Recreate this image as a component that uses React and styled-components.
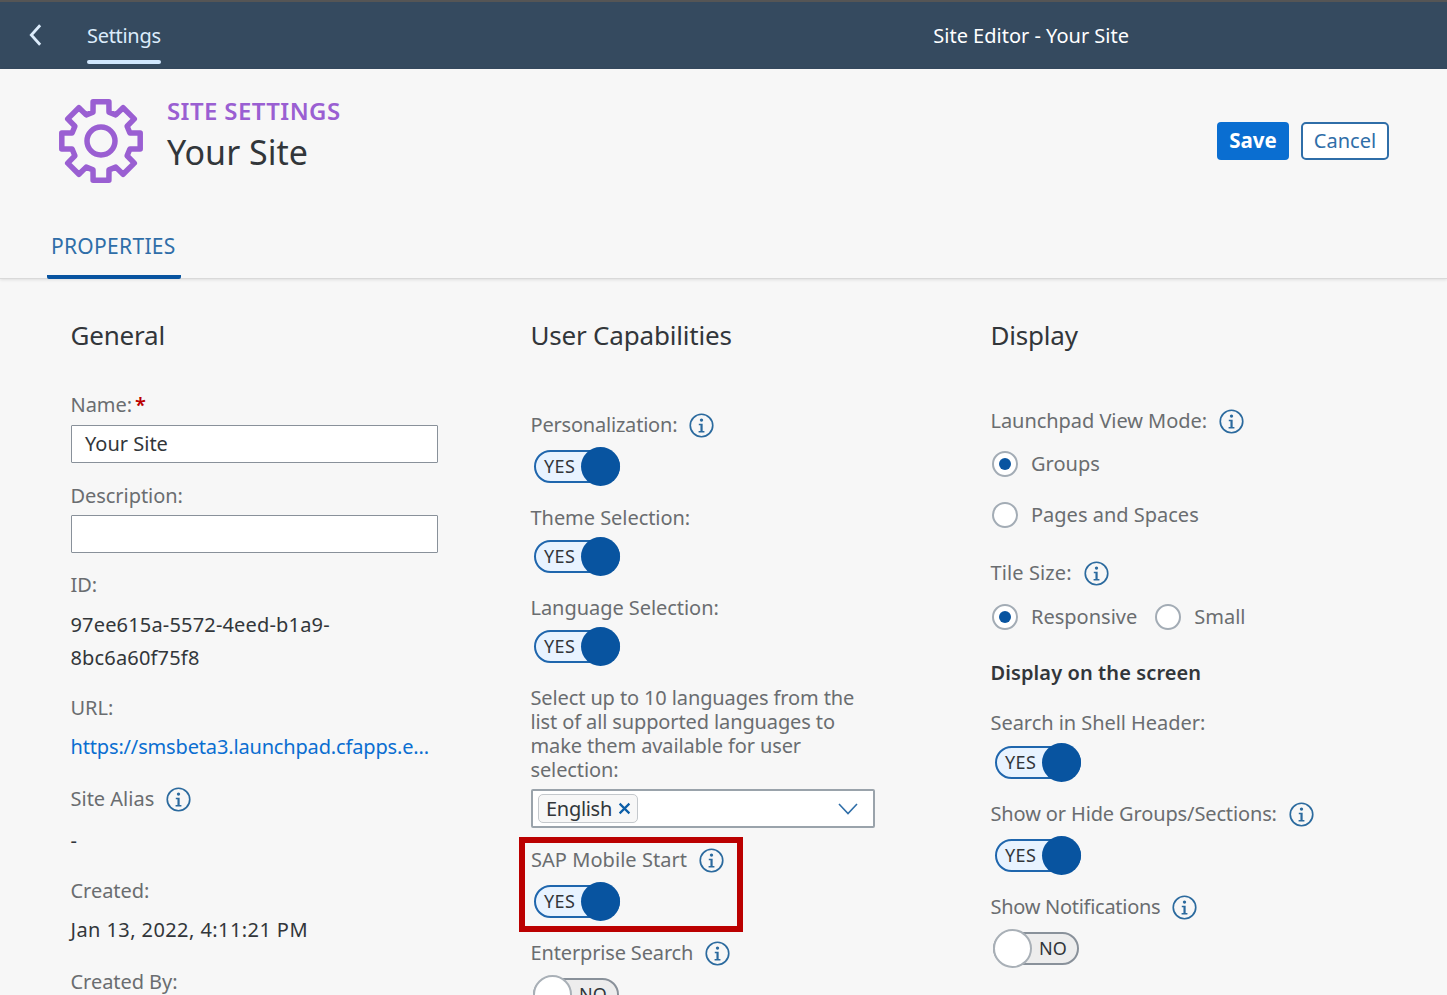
import React from "react";
import styled, { createGlobalStyle } from "styled-components";

const GlobalStyle = createGlobalStyle`
  html, body { margin: 0; padding: 0; height: 995px; overflow: hidden; background: #f7f7f7; }
  * { box-sizing: border-box; }
`;

const FONT = `"Noto Sans", "Open Sans", sans-serif`;

function gearPath(cx, cy) {
  const teeth = 8;
  const outer = 40;
  const root = 30;
  const pts = [];
  for (let i = 0; i < teeth; i++) {
    const a = (i * 2 * Math.PI) / teeth - Math.PI / 2;
    const tooth = 0.2;
    const base = 0.27;
    pts.push([a - base, root], [a - tooth, outer], [a + tooth, outer], [a + base, root]);
  }
  return (
    pts
      .map(([a, r], i) => `${i ? "L" : "M"}${(cx + r * Math.cos(a)).toFixed(1)} ${(cy + r * Math.sin(a)).toFixed(1)}`)
      .join(" ") + " Z"
  );
}

function GearIcon() {
  return (
    <GearSvg viewBox="0 0 88 88">
      <path d={gearPath(44, 44)} fill="none" stroke="#9a5fd2" strokeWidth="5.5" strokeLinejoin="round" />
      <circle cx="44" cy="44" r="14" fill="none" stroke="#9a5fd2" strokeWidth="5.5" />
    </GearSvg>
  );
}

function InfoIcon() {
  return (
    <InfoSvg viewBox="0 0 24 24">
      <circle cx="12" cy="12" r="10.8" fill="none" stroke="#2b6a9e" strokeWidth="1.6" />
      <circle cx="12" cy="6.8" r="1.6" fill="#2b6a9e" />
      <path d="M9.4 10.2h3.7v7h1.7v1.5H9.2v-1.5h1.8v-5.5H9.4z" fill="#2b6a9e" />
    </InfoSvg>
  );
}

function Toggle({ on = true, indent = 3, gap = 10 }) {
  return (
    <ToggleBox $indent={indent} $gap={gap}>
      <Track $on={on}>{on ? "YES" : "NO"}</Track>
      <Knob $on={on} />
    </ToggleBox>
  );
}

function Radio({ label, checked, gap }) {
  return (
    <RadioItem $gap={gap}>
      <RadioDot $checked={checked} />
      <RadioText>{label}</RadioText>
    </RadioItem>
  );
}

export default function App() {
  return (
    <Page>
      <GlobalStyle />
      <Shell>
        <BackButton viewBox="0 0 14 24">
          <path d="M12 1.5 L2.5 12 L12 22.5" fill="none" stroke="#dcecfb" strokeWidth="3" />
        </BackButton>
        <ShellTab>Settings</ShellTab>
        <ShellTitle>Site Editor - Your Site</ShellTitle>
      </Shell>

      <Header>
        <HeaderTop>
          <GearIcon />
          <TitleBlock>
            <Eyebrow>SITE SETTINGS</Eyebrow>
            <SiteName>Your Site</SiteName>
          </TitleBlock>
          <Actions>
            <SaveButton>Save</SaveButton>
            <CancelButton>Cancel</CancelButton>
          </Actions>
        </HeaderTop>
        <Tab>PROPERTIES</Tab>
      </Header>

      <Columns>
        <Column>
          <Heading>General</Heading>
          <Label $top={39}>Name:<Required>*</Required></Label>
          <TextBox $top={8}>Your Site</TextBox>
          <Label $top={21}>Description:</Label>
          <TextBox $top={7} />
          <Label $top={20}>ID:</Label>
          <Value $top={11} $lines={33} $ls={0.17}>97ee615a-5572-4eed-b1a9-<br />8bc6a60f75f8</Value>
          <Label $top={22}>URL:</Label>
          <LinkValue $top={15} $ls={-0.16}>https://smsbeta3.launchpad.cfapps.e...</LinkValue>
          <Label $top={28} $ls={0}>Site Alias<InfoIcon /></Label>
          <Value $top={18}>-</Value>
          <Label $top={26}>Created:</Label>
          <Value $top={15} $ls={0.42}>Jan 13, 2022, 4:11:21 PM</Value>
          <Label $top={28}>Created By:</Label>
        </Column>

        <Column>
          <Heading>User Capabilities</Heading>
          <Label $top={59} $ls={-0.2}>Personalization:<InfoIcon /></Label>
          <Toggle />
          <Label $top={20}>Theme Selection:</Label>
          <Toggle gap={7} />
          <Label $top={20}>Language Selection:</Label>
          <Toggle gap={7} />
          <Hint>
            Select up to 10 languages from the<br />
            list of all supported languages to<br />
            make them available for user<br />
            selection:
          </Hint>
          <Select>
            <Chip>English<ChipClose viewBox="0 0 12 12"><path d="M1.5 1.5 L10.5 10.5 M10.5 1.5 L1.5 10.5" stroke="#0b5ea8" strokeWidth="2" /></ChipClose></Chip>
            <Chevron viewBox="0 0 20 12"><path d="M1 1 L10 10.5 L19 1" fill="none" stroke="#2f6ea8" strokeWidth="1.6" /></Chevron>
          </Select>
          <Highlight>
            <Label $ls={0.05}>SAP Mobile Start<InfoIcon /></Label>
            <Toggle />
          </Highlight>
          <Label $top={9} $ls={-0.15}>Enterprise Search<InfoIcon /></Label>
          <Toggle on={false} indent={2} />
        </Column>

        <Column>
          <Heading>Display</Heading>
          <Label $top={55} $ls={-0.05}>Launchpad View Mode:<InfoIcon /></Label>
          <Radio label="Groups" checked gap={18} />
          <Radio label="Pages and Spaces" gap={25} />
          <Label $top={33} $ls={0.1}>Tile Size:<InfoIcon /></Label>
          <RadioRow>
            <Radio label="Responsive" checked />
            <Radio label="Small" />
          </RadioRow>
          <SubHeading>Display on the screen</SubHeading>
          <Label $top={26}>Search in Shell Header:</Label>
          <Toggle indent={4} gap={8} />
          <Label $top={20} $ls={-0.13}>Show or Hide Groups/Sections:<InfoIcon /></Label>
          <Toggle indent={4} />
          <Label $top={20} $ls={-0.28}>Show Notifications<InfoIcon /></Label>
          <Toggle on={false} indent={2} />
        </Column>
      </Columns>
    </Page>
  );
}

const Page = styled.div`
  width: 1447px;
  height: 995px;
  overflow: hidden;
  background: #f7f7f7;
  font-family: ${FONT};
`;

const Shell = styled.div`
  height: 69px;
  background: #354a5f;
  border-top: 2px solid #555;
  display: flex;
  align-items: center;
  padding: 0 318px 0 29px;
`;

const BackButton = styled.svg`
  width: 13px;
  height: 24px;
  margin-top: -2px;
`;

const ShellTab = styled.div`
  margin-left: 45px;
  height: 67px;
  line-height: 67px;
  width: 74px;
  font-size: 20px;
  letter-spacing: -0.3px;
  color: #dcecfb;
  white-space: nowrap;
  position: relative;
  &::after {
    content: "";
    position: absolute;
    left: 0;
    right: 0;
    top: 58px;
    height: 4px;
    border-radius: 2px;
    background: #d1e8ff;
  }
`;

const ShellTitle = styled.div`
  margin-left: auto;
  font-size: 20px;
  color: #fff;
  white-space: nowrap;
`;

const Header = styled.div`
  height: 210px;
  background: #f7f7f7;
  border-bottom: 1px solid #d9d9d9;
  box-shadow: 0 1px 3px rgba(0, 0, 0, 0.1);
  display: flex;
  flex-direction: column;
  justify-content: space-between;
`;

const HeaderTop = styled.div`
  display: flex;
  padding: 28px 58px 0 57px;
`;

const GearSvg = styled.svg`
  width: 88px;
  height: 88px;
`;

const TitleBlock = styled.div`
  margin-left: 22px;
`;

const Eyebrow = styled.div`
  font-size: 24px;
  font-weight: 600;
  letter-spacing: 0.4px;
  line-height: 28px;
  margin-bottom: 2px;
  color: #9a5fd2;
  white-space: nowrap;
`;

const SiteName = styled.div`
  font-size: 34px;
  line-height: 50px;
  color: #32363a;
  white-space: nowrap;
`;

const Actions = styled.div`
  margin-left: auto;
  display: flex;
  gap: 12px;
  padding-top: 25px;
`;

const SaveButton = styled.button`
  width: 72px;
  height: 38px;
  border: none;
  border-radius: 4px;
  background: #0a6ed1;
  color: #fff;
  font: 700 20.5px ${FONT};
  padding: 0 0 2px;
`;

const CancelButton = styled.button`
  width: 88px;
  height: 38px;
  border: 2px solid #2f6ea8;
  border-radius: 5px;
  background: #fff;
  color: #2f6ea8;
  font: 400 20px ${FONT};
  padding: 0 0 2px;
`;

const Tab = styled.div`
  align-self: flex-start;
  margin-left: 47px;
  width: 134px;
  height: 52px;
  padding: 4px 0 0 4px;
  line-height: 30px;
  border-bottom: 4px solid #0854a0;
  border-radius: 0 0 2px 2px;
  font-size: 21px;
  letter-spacing: 0.3px;
  color: #2f6ea8;
  white-space: nowrap;
  margin-bottom: -1px;
`;

const Columns = styled.div`
  display: grid;
  grid-template-columns: repeat(3, 460px);
  padding: 39px 0 0 71px;
`;

const Column = styled.div`
  display: flex;
  flex-direction: column;
  align-items: flex-start;
`;

const Heading = styled.div`
  margin: -1px 0 1px -0.5px;
  font-size: 26px;
  letter-spacing: -0.2px;
  line-height: 36px;
  color: #32363a;
  white-space: nowrap;
`;

const Label = styled.div`
  margin: ${(p) => p.$top || 0}px 0 0 -0.5px;
  padding-bottom: 2px;
  display: flex;
  align-items: center;
  height: 24px;
  font-size: 20px;
  letter-spacing: ${(p) => p.$ls ?? -0.05}px;
  color: #6a6d70;
  white-space: nowrap;
`;

const Required = styled.span`
  color: #bb0000;
  margin-left: 3px;
  font-weight: 600;
`;

const InfoSvg = styled.svg`
  width: 25px;
  height: 25px;
  margin: 2px 0 0 12px;
  flex-shrink: 0;
`;

const TextBox = styled.div`
  margin-top: ${(p) => p.$top}px;
  width: 367px;
  height: 38px;
  padding-left: 13px;
  line-height: 36px;
  font-size: 20px;
  color: #32363a;
  background: #fff;
  border: 1px solid #89919a;
  border-radius: 1px;
`;

const Value = styled.div`
  margin: ${(p) => p.$top}px 0 0 -0.5px;
  font-size: 20px;
  letter-spacing: ${(p) => p.$ls || 0}px;
  line-height: ${(p) => p.$lines || 24}px;
  color: #32363a;
  white-space: nowrap;
`;

const LinkValue = styled(Value)`
  color: #0a6ed1;
`;

const ToggleBox = styled.div`
  position: relative;
  margin: ${(p) => p.$gap}px 0 0 ${(p) => p.$indent}px;
  width: 86px;
  height: 39px;
  display: flex;
  align-items: center;
`;

const Track = styled.div`
  width: 100%;
  height: 33px;
  border-radius: 17px;
  border: 2px solid ${(p) => (p.$on ? "#1f66ad" : "#89919a")};
  background: ${(p) => (p.$on ? "#e8f3ff" : "#ededed")};
  color: #32363a;
  font-size: 18px;
  letter-spacing: ${(p) => (p.$on ? "0.4px" : "0")};
  line-height: 28px;
  padding: ${(p) => (p.$on ? "0 0 0 8px" : "0 0 0 44px")};
`;

const Knob = styled.div`
  position: absolute;
  top: 0;
  width: 39px;
  height: 39px;
  border-radius: 50%;
  ${(p) => (p.$on
    ? "right: 0; background: #0854a0;"
    : "left: 0; background: #fff; border: 2px solid #a9b0b7;")}
`;

const Hint = styled.div`
  margin: 20px 0 0 -0.5px;
  font-size: 20px;
  letter-spacing: -0.12px;
  line-height: 24px;
  color: #6a6d70;
  white-space: nowrap;
`;

const Select = styled.div`
  margin-top: 7px;
  width: 344px;
  height: 39px;
  padding: 0 15px 0 5px;
  display: flex;
  align-items: center;
  justify-content: space-between;
  background: #fff;
  border: 2px solid #9aa3ab;
  border-radius: 2px;
`;

const Chip = styled.div`
  height: 29px;
  width: 100px;
  padding-left: 7px;
  display: flex;
  align-items: center;
  gap: 6px;
  font-size: 20px;
  letter-spacing: -0.3px;
  color: #32363a;
  background: #f7f7f7;
  border: 1px solid #c4c8cc;
  border-radius: 5px;
`;

const ChipClose = styled.svg`
  width: 13px;
  height: 13px;
`;

const Chevron = styled.svg`
  width: 20px;
  height: 12px;
`;

const Highlight = styled.div`
  margin: 9px 0 0 -12px;
  width: 224px;
  height: 95px;
  padding: 5px 0 0 6px;
  border: 6px solid #bb0000;
  & > ${Label} {
    margin-left: 0;
  }
`;

const RadioItem = styled.div`
  display: flex;
  align-items: center;
  height: 26px;
  margin: ${(p) => p.$gap || 0}px 0 0 1px;
  gap: 13px;
`;

const RadioDot = styled.div`
  width: 26px;
  height: 26px;
  border-radius: 50%;
  background: #fff;
  border: 2px solid #a3acb5;
  display: flex;
  align-items: center;
  justify-content: center;
  &::after {
    content: "";
    display: ${(p) => (p.$checked ? "block" : "none")};
    width: 12px;
    height: 12px;
    border-radius: 50%;
    background: #0854a0;
  }
`;

const RadioText = styled.span`
  font-size: 20px;
  line-height: 24px;
  margin-top: -1px;
  color: #6a6d70;
  white-space: nowrap;
`;

const RadioRow = styled.div`
  margin-top: 19px;
  display: flex;
  gap: 17px;
`;

const SubHeading = styled.div`
  margin: 31px 0 0 -0.5px;
  font-size: 20px;
  font-weight: 600;
  letter-spacing: 0.1px;
  line-height: 24px;
  color: #32363a;
  white-space: nowrap;
`;
